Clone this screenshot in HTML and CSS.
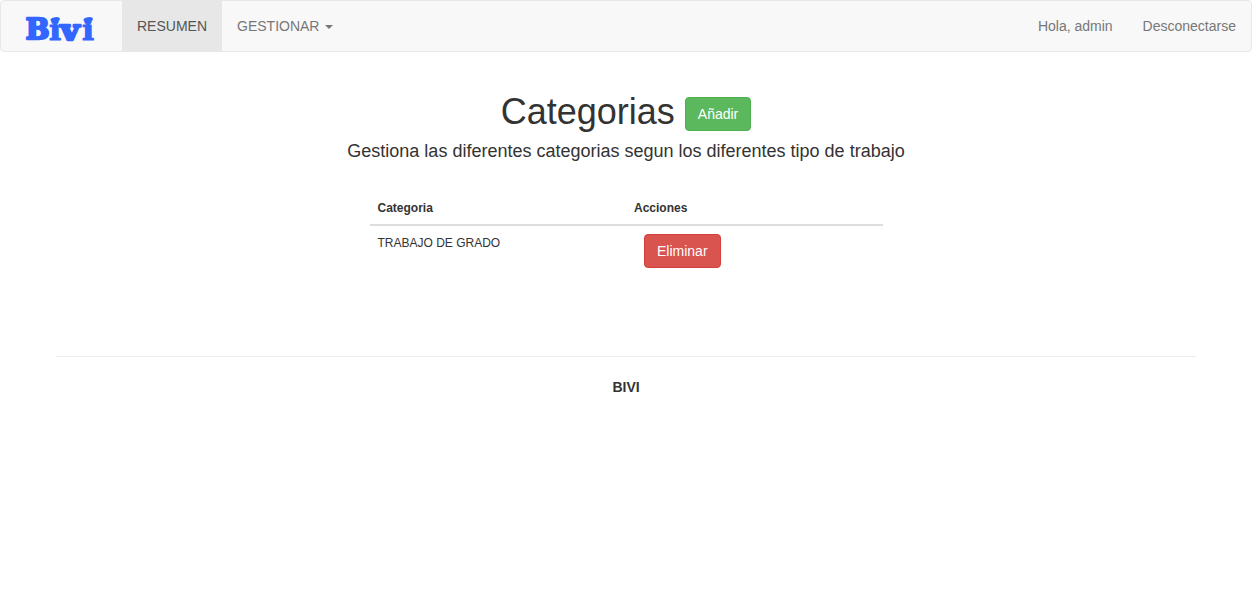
FILE: index.html
```html
<!DOCTYPE html>
<html lang="es">
<head>
<meta charset="utf-8">
<title>Bivi - Categorias</title>
<link rel="stylesheet" href="styles.css">
</head>
<body>
<nav class="navbar">
  <a class="brand" href="#" aria-label="Bivi">
    <svg class="logo" width="76" height="34" viewBox="0 0 76 34">
      <g class="logo-text">
        <text transform="translate(4.8 27.4)">B</text>
        <text class="thin" transform="translate(27.9 28.4) scale(1.14 1)">i</text>
        <text transform="translate(39.6 28) scale(1.16 1)">v</text>
        <text class="thin" transform="translate(60.9 28.4) scale(1.14 1)">i</text>
      </g>
      <g class="logo-dots">
        <ellipse cx="34.2" cy="7.5" rx="4.8" ry="2.4" transform="rotate(-10 34.2 7.5)"/>
        <ellipse cx="67.2" cy="7.5" rx="4.8" ry="2.4" transform="rotate(-10 67.2 7.5)"/>
      </g>
    </svg>
  </a>
  <a class="nav-link active" href="#">RESUMEN</a>
  <a class="nav-link" href="#">GESTIONAR <span class="caret"></span></a>
  <div class="nav-right">
    <a class="nav-link" href="#">Hola, admin</a>
    <a class="nav-link" href="#">Desconectarse</a>
  </div>
</nav>
<main class="container">
  <h1 class="title">Categorias <a class="btn btn-success" href="#">Añadir</a></h1>
  <p class="lead">Gestiona las diferentes categorias segun los diferentes tipo de trabajo</p>
  <table class="table">
    <thead>
      <tr><th>Categoria</th><th>Acciones</th></tr>
    </thead>
    <tbody>
      <tr><td class="name">TRABAJO DE GRADO</td><td><a class="btn btn-danger" href="#">Eliminar</a></td></tr>
    </tbody>
  </table>
  <hr class="divider">
  <footer class="footer">BIVI</footer>
</main>
</body>
</html>
```
FILE: styles.css
```css
* { box-sizing: border-box; }
body {
  margin: 0;
  font-family: "Liberation Sans", Arial, sans-serif;
  font-size: 14px;
  line-height: 20px;
  color: #333;
  background: #fff;
}
a { text-decoration: none; }
.navbar {
  display: flex;
  height: 52px;
  background: #f8f8f8;
  border: 1px solid #e7e7e7;
  border-radius: 4px;
}
.brand { width: 121px; padding: 11px 0 0 20px; }
.logo { display: block; overflow: visible; }
.logo-text {
  font-family: "DejaVu Serif", serif;
  font-weight: bold;
  font-size: 28px;
  fill: #36f;
  stroke: #36f;
  stroke-width: 2.4px;
  stroke-linejoin: round;
}
.logo-text .thin { stroke-width: 1px; }
.logo-dots { fill: #36f; }
.nav-link { padding: 15px; color: #777; white-space: nowrap; }
.nav-link.active { color: #555; background: #e7e7e7; }
.nav-right { display: flex; margin-left: auto; }
.caret {
  display: inline-block;
  margin-left: 2px;
  vertical-align: middle;
  border-top: 4px solid #777;
  border-left: 4px solid transparent;
  border-right: 4px solid transparent;
}
.container { width: 1140px; margin: 0 auto; }
.title {
  margin: 40px 0 9px;
  font-size: 36px;
  font-weight: 500;
  line-height: 39.6px;
  text-align: center;
}
.lead { margin: 0; font-size: 18px; line-height: 20px; text-align: center; }
.btn {
  display: inline-block;
  padding: 6px 12px;
  border: 1px solid;
  border-radius: 4px;
  font-size: 14px;
  font-weight: 400;
  line-height: 20px;
  color: #fff;
  vertical-align: middle;
}
.btn-success { background: #5cb85c; border-color: #4cae4c; }
.btn-danger { margin-left: 10px; background: #d9534f; border-color: #d43f3a; }
.table {
  width: 513px;
  margin: 31px auto 0;
  table-layout: fixed;
  border-collapse: collapse;
  font-size: 12px;
  line-height: 17px;
}
.table th, .table td { padding: 8px; text-align: left; vertical-align: top; }
.table th { padding-bottom: 7px; border-bottom: 2px solid #ddd; }
.table .name { padding-top: 9px; }
.divider { height: 1px; margin: 80px 0 20px; border: 0; background: #eee; }
.footer { font-weight: bold; text-align: center; }
```
